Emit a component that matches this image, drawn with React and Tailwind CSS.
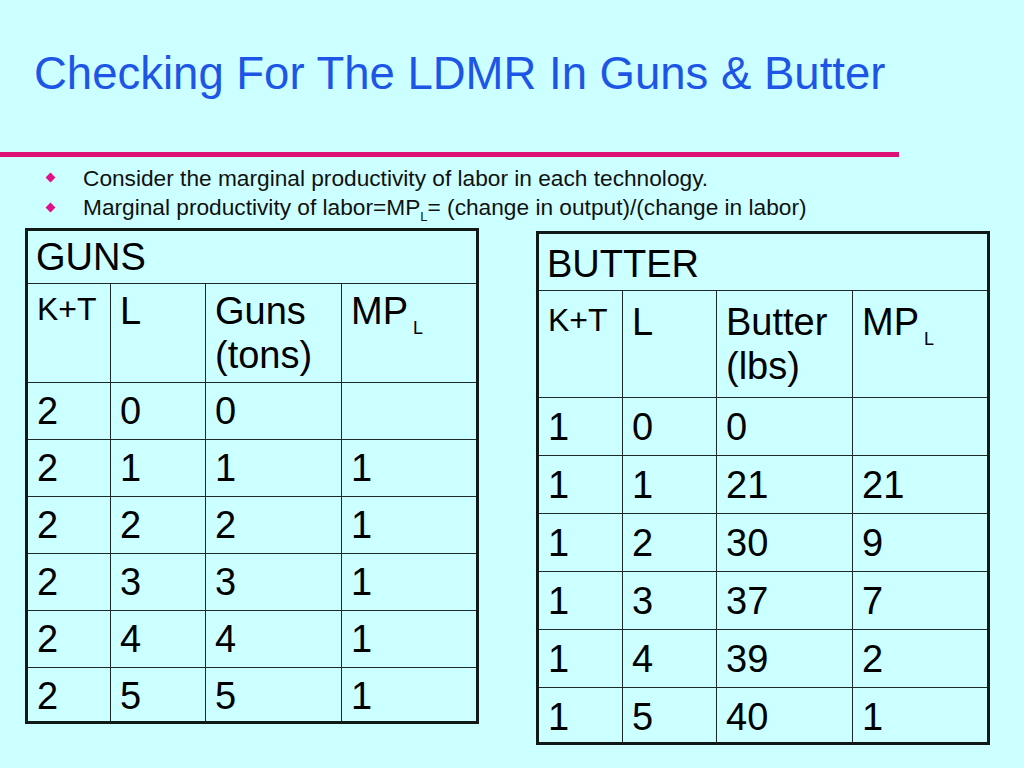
import React from "react";

const COLS = ["w-[82px]", "w-[95px]", "w-[136px]", "w-[135px]"];
const COLS_B = ["w-[83px]", "w-[94px]", "w-[136px]", "w-[135px]"];

function MP() {
  return (
    <span>
      MP<span className="text-[18px] leading-none ml-[5px] align-[-10px]">L</span>
    </span>
  );
}

function DataTable({ title, header, rows, cols, titleH, titlePt, headH, headPt, rowHs, rowPt }) {
  return (
    <div className="border-[3px] border-[#101818] text-black text-[38px]">
      <div className={`${titleH} ${titlePt} pl-[8px] leading-[44px] border-b border-[#1e2a2a]`}>{title}</div>
      <div className={`flex ${headH} border-b border-[#1e2a2a]`}>
        {header.map((h, i) => (
          <div
            key={i}
            className={`${cols[i]} ${i > 0 ? "border-l border-[#1e2a2a]" : ""} ${headPt} pl-[9px] ${
              i === 0 ? "text-[32px] leading-[40px]" : "leading-[44px]"
            }`}
          >
            {h}
          </div>
        ))}
      </div>
      {rows.map((r, ri) => (
        <div
          key={ri}
          className={`flex ${rowHs[ri]} ${ri < rows.length - 1 ? "border-b border-[#1e2a2a]" : ""}`}
        >
          {r.map((c, i) => (
            <div
              key={i}
              className={`${cols[i]} ${i > 0 ? "border-l border-[#1e2a2a]" : ""} ${rowPt} pl-[9px] leading-[44px]`}
            >
              {c}
            </div>
          ))}
        </div>
      ))}
    </div>
  );
}

export default function App() {
  return (
    <div className="w-[1024px] h-[768px] bg-[#ccffff] overflow-hidden font-['Liberation_Sans',Arial,sans-serif]">
      <h1 className="pt-[51px] pl-[34px] text-[45.5px] leading-none text-[#1d56e6] font-normal">
        Checking For The LDMR In Guns &amp; Butter
      </h1>
      <div className="mt-[55px] h-[5px] w-[899px] bg-[#de1177]" />
      <ul className="mt-[6px] text-[22.7px] leading-[30px] text-[#111]">
        <li className="flex items-center h-[30px] pl-[45px]">
          <div className="w-[38px] flex">
            <div className="w-[7px] h-[7px] ml-[2px] rotate-45 bg-[#e0108a]" />
          </div>
          <span>Consider the marginal productivity of labor in each technology.</span>
        </li>
        <li className="flex items-center h-[30px] pl-[45px]">
          <div className="w-[38px] flex">
            <div className="w-[7px] h-[7px] ml-[2px] rotate-45 bg-[#e0108a]" />
          </div>
          <span>
            Marginal productivity of labor=MP<span className="text-[13px] leading-none align-[-6px]">L</span>= (change in output)/(change in labor)
          </span>
        </li>
      </ul>
      <div className="flex items-start pl-[25px] gap-[57px]">
        <div className="mt-[5px]">
          <DataTable
            title="GUNS"
            header={["K+T", "L", <span key="g">Guns<br />(tons)</span>, <MP key="m" />]}
            rows={[
              ["2", "0", "0", ""],
              ["2", "1", "1", "1"],
              ["2", "2", "2", "1"],
              ["2", "3", "3", "1"],
              ["2", "4", "4", "1"],
              ["2", "5", "5", "1"],
            ]}
            cols={COLS}
            titleH="h-[53px]"
            titlePt="pt-[4px]"
            headH="h-[99px]"
            headPt="pt-[5px]"
            rowHs={["h-[57px]", "h-[57px]", "h-[57px]", "h-[57px]", "h-[57px]", "h-[53px]"]}
            rowPt="pt-[6px]"
          />
        </div>
        <div className="mt-[8px]">
          <DataTable
            title="BUTTER"
            header={["K+T", "L", <span key="b">Butter<br />(lbs)</span>, <MP key="m" />]}
            rows={[
              ["1", "0", "0", ""],
              ["1", "1", "21", "21"],
              ["1", "2", "30", "9"],
              ["1", "3", "37", "7"],
              ["1", "4", "39", "2"],
              ["1", "5", "40", "1"],
            ]}
            cols={COLS_B}
            titleH="h-[57px]"
            titlePt="pt-[8px]"
            headH="h-[107px]"
            headPt="pt-[9px]"
            rowHs={["h-[58px]", "h-[58px]", "h-[58px]", "h-[58px]", "h-[58px]", "h-[54px]"]}
            rowPt="pt-[7px]"
          />
        </div>
      </div>
    </div>
  );
}
